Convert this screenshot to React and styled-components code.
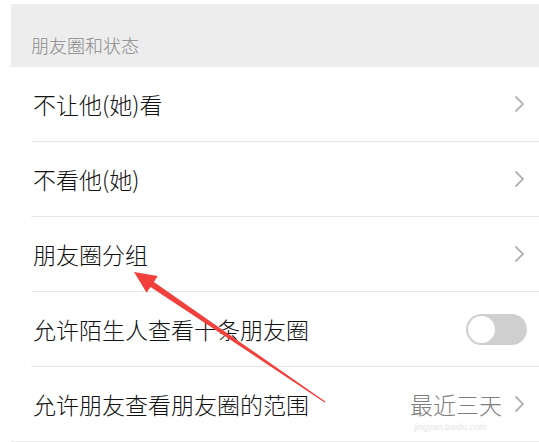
import styled, { createGlobalStyle } from "styled-components";

const GlobalStyle = createGlobalStyle`
  html, body {
    margin: 0;
    padding: 0;
    background: #fff;
  }
  body {
    font-family: "Noto Sans CJK SC", "Noto Sans", sans-serif;
    width: 539px;
    height: 442px;
    overflow: hidden;
  }
`;

const Page = styled.div`
  position: relative;
  width: 539px;
  height: 442px;
  padding: 4px 0 0 11px;
  box-sizing: border-box;
  background: #fff;
`;

const Panel = styled.div`
  display: flex;
  flex-direction: column;
  background: #ededed;
  height: 100%;
`;

const SectionTitle = styled.div`
  height: 63px;
  box-sizing: border-box;
  display: flex;
  align-items: center;
  padding: 18px 0 0 20px;
  font-size: 18px;
  font-weight: 300;
  color: #8a8a8a;
`;

const List = styled.div`
  background: #fff;
  padding-left: 20px;
  height: 374px;
  display: flex;
  flex-direction: column;
`;

const Row = styled.div`
  display: flex;
  align-items: center;
  height: 74px;
  flex: 0 0 74px;
  padding-right: 14px;
  border-bottom: ${(p) => (p.$last ? "none" : "1px solid #e6e6e6")};
`;

const Label = styled.span`
  flex: 1;
  padding-left: 2px;
  font-size: 23px;
  font-weight: 300;
  color: #111;
  white-space: nowrap;
`;

const Value = styled.span`
  font-size: 23px;
  font-weight: 300;
  color: #7e7e7e;
  margin-right: 12px;
`;

const Chevron = () => (
  <svg width="11" height="18" viewBox="0 0 11 18">
    <polyline
      points="1.5,1.5 9,9 1.5,16.5"
      fill="none"
      stroke="#b2b2b2"
      strokeWidth="1.8"
    />
  </svg>
);

const Track = styled.div`
  width: 61px;
  height: 31px;
  box-sizing: border-box;
  border-radius: 16px;
  background: #cfcfcf;
  padding: 2px;
  display: flex;
  align-items: center;
  margin-right: -2px;
`;

const Knob = styled.div`
  width: 27px;
  height: 27px;
  border-radius: 50%;
  background: #fff;
`;

const Arrow = styled.svg`
  position: absolute;
  left: 0;
  top: 0;
  pointer-events: none;
`;

const Watermark = styled.div`
  position: absolute;
  left: 414px;
  top: 422px;
  font-family: "Liberation Sans", sans-serif;
  font-size: 9px;
  color: #e4e4e4;
`;

const items = [
  { label: "不让他(她)看", type: "link" },
  { label: "不看他(她)", type: "link" },
  { label: "朋友圈分组", type: "link" },
  { label: "允许陌生人查看十条朋友圈", type: "switch" },
  { label: "允许朋友查看朋友圈的范围", type: "link", value: "最近三天" },
];

export default function App() {
  return (
    <>
      <GlobalStyle />
      <Page>
        <Panel>
          <SectionTitle>朋友圈和状态</SectionTitle>
          <List>
            {items.map((it, i) => (
              <Row key={it.label} $last={i === items.length - 1}>
                <Label>{it.label}</Label>
                {it.value && <Value>{it.value}</Value>}
                {it.type === "switch" ? (
                  <Track>
                    <Knob />
                  </Track>
                ) : (
                  <Chevron />
                )}
              </Row>
            ))}
          </List>
        </Panel>
        <Watermark>jingyan.baidu.com</Watermark>
        <Arrow width="539" height="442" viewBox="0 0 539 442">
          <polygon
            points="134,272 157.8,276.1 153.9,281.9 325.3,401.6 324.7,402.4 150.5,286.9 146.6,292.7"
            fill="#f2403c"
          />
        </Arrow>
      </Page>
    </>
  );
}
